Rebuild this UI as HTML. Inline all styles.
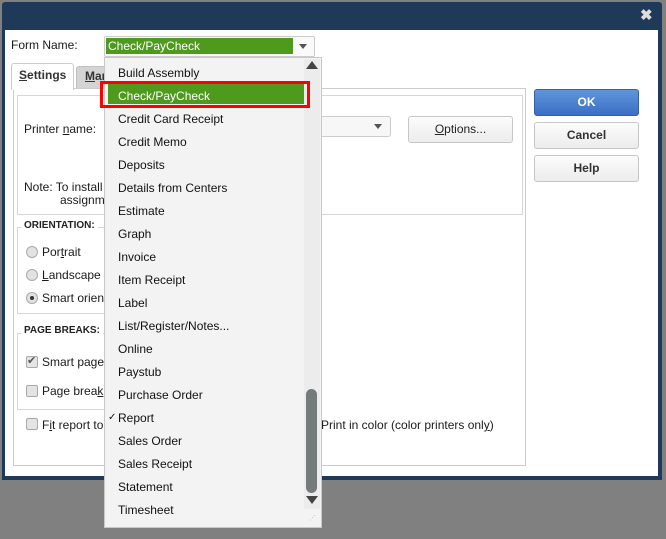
<!DOCTYPE html>
<html><head><style>
*{margin:0;padding:0;box-sizing:border-box}
body{width:666px;height:539px;background:#808080;position:relative;overflow:hidden;font-family:"Liberation Sans",Arial,sans-serif;font-size:12px;color:#1a1a1a}
.a{position:absolute}
.t{position:absolute;white-space:nowrap;line-height:14px}
.btn{position:absolute;border:1px solid #c6c6c6;border-radius:3px;background:linear-gradient(#fcfcfc,#ececec);text-align:center;font-weight:bold;color:#333;font-size:12px}
.grp{position:absolute;border:1px solid #d6d6d6}
.lbl{position:absolute;background:#fff;font-size:10px;font-weight:bold;color:#222;padding:0 3px;line-height:12px}
.rad{position:absolute;width:12px;height:12px;border:1px solid #aaa;border-radius:50%;background:#e2e2e2}
.chk{position:absolute;width:12px;height:12px;border:1px solid #aaa;background:#e4e4e4;border-radius:2px}
.it{position:absolute;left:118px;font-size:12px;line-height:14px;white-space:nowrap;color:#111}
</style></head><body>
<div class="a" style="left:2px;top:2px;width:660px;height:478px;background:#1f3a58;border-radius:3px 3px 0 0"></div>
<div class="a" style="left:5px;top:30px;width:653px;height:446px;background:#fff"></div>
<div class="t" style="left:640px;top:9px;color:#ddd;font-weight:bold;font-size:15px">✖</div>

<div class="t" style="left:11px;top:38px">Form Name:</div>
<div class="a" style="left:104px;top:36px;width:211px;height:21px;border:1px solid #ccc;border-radius:2px;background:#fafafa"></div>
<div class="a" style="left:106px;top:38px;width:187px;height:16px;background:#4e9a1c"></div>
<div class="t" style="left:108px;top:39px;color:#fff">Check/PayCheck</div>
<div class="a" style="left:299px;top:44px;border:4px solid transparent;border-top:5px solid #555"></div>

<!-- tabs -->
<div class="a" style="left:76px;top:66px;width:40px;height:23px;background:#d4d4d4;border:1px solid #c0c0c0;border-radius:3px 3px 0 0"></div>
<div class="t" style="left:85px;top:69px;font-weight:bold;color:#333"><u>M</u>ar</div>
<div class="a" style="left:13px;top:88px;width:513px;height:378px;border:1px solid #ccc"></div>
<div class="a" style="left:11px;top:63px;width:63px;height:27px;background:#fff;border:1px solid #ccc;border-bottom:none;border-radius:3px 3px 0 0"></div>
<div class="t" style="left:19px;top:68px;font-weight:bold;color:#333"><u>S</u>ettings</div>

<div class="grp" style="left:17px;top:95px;width:506px;height:120px"></div>
<div class="t" style="left:24px;top:122px">Printer <u>n</u>ame:</div>
<div class="a" style="left:320px;top:116px;width:71px;height:21px;border:1px solid #ccc;border-radius:3px;background:#f7f7f7"></div>
<div class="a" style="left:374px;top:124px;border:4px solid transparent;border-top:5px solid #555"></div>
<div class="btn" style="left:408px;top:116px;width:105px;height:27px;line-height:25px;font-weight:normal;color:#222"><u>O</u>ptions...</div>
<div class="t" style="left:24px;top:180px">Note: To install</div>
<div class="t" style="left:60px;top:193px">assignm</div>

<div class="grp" style="left:17px;top:227px;width:100px;height:87px;border-right:none"></div>
<div class="lbl" style="left:21px;top:220px">ORIENTATION:</div>
<div class="rad" style="left:26px;top:246px"></div><div class="t" style="left:42px;top:245px">Por<u>t</u>rait</div>
<div class="rad" style="left:26px;top:269px"></div><div class="t" style="left:42px;top:268px"><u>L</u>andscape</div>
<div class="rad" style="left:26px;top:292px"></div><div class="a" style="left:30px;top:296px;width:4px;height:4px;border-radius:50%;background:#333"></div><div class="t" style="left:42px;top:291px">Smart orien</div>

<div class="grp" style="left:17px;top:333px;width:100px;height:77px;border-right:none"></div>
<div class="lbl" style="left:21px;top:325px">PAGE BREAKS:</div>
<div class="chk" style="left:26px;top:356px"></div><div class="t" style="left:27px;top:354px;font-size:11px;color:#555">✔</div><div class="t" style="left:42px;top:355px">Smart page</div>
<div class="chk" style="left:26px;top:385px"></div><div class="t" style="left:42px;top:384px">Page brea<u>k</u></div>
<div class="chk" style="left:26px;top:418px"></div><div class="t" style="left:42px;top:418px">F<u>i</u>t report to</div>
<div class="t" style="left:321px;top:418px">Print in color (color printers onl<u>y</u>)</div>

<div class="btn" style="left:534px;top:89px;width:105px;height:27px;line-height:25px;background:linear-gradient(#5f95dd,#3c6fc4);border-color:#3560a8;color:#fff">OK</div>
<div class="btn" style="left:534px;top:122px;width:105px;height:27px;line-height:25px">Cancel</div>
<div class="btn" style="left:534px;top:155px;width:105px;height:27px;line-height:25px">Help</div>

<!-- dropdown -->
<div class="a" style="left:104px;top:57px;width:218px;height:471px;background:#f3f3f3;border:1px solid #c8c8c8"></div>
<div class="a" style="left:304px;top:59px;width:16px;height:450px;background:#ececec"></div>
<div class="a" style="left:306px;top:61px;border:6px solid transparent;border-bottom:8px solid #444;border-top:0"></div>
<div class="a" style="left:306px;top:389px;width:11px;height:104px;background:#757a7a;border-radius:6px"></div>
<div class="a" style="left:306px;top:496px;border:6px solid transparent;border-top:8px solid #444;border-bottom:0"></div>
<div class="t" style="left:309px;top:512px;font-size:7px;color:#bbb">⋰</div>
<div class="a" style="left:108px;top:84px;width:196px;height:20px;background:#4e9a1c"></div>
<div class="a" style="left:100px;top:81px;width:210px;height:27px;border:3px solid #f00"></div>
<div class="it" style="top:66px">Build Assembly</div>
<div class="it" style="top:89px;color:#fff">Check/PayCheck</div>
<div class="it" style="top:112px">Credit Card Receipt</div>
<div class="it" style="top:135px">Credit Memo</div>
<div class="it" style="top:158px">Deposits</div>
<div class="it" style="top:181px">Details from Centers</div>
<div class="it" style="top:204px">Estimate</div>
<div class="it" style="top:227px">Graph</div>
<div class="it" style="top:250px">Invoice</div>
<div class="it" style="top:273px">Item Receipt</div>
<div class="it" style="top:296px">Label</div>
<div class="it" style="top:319px">List/Register/Notes...</div>
<div class="it" style="top:342px">Online</div>
<div class="it" style="top:365px">Paystub</div>
<div class="it" style="top:388px">Purchase Order</div>
<div class="it" style="top:411px"><span style="position:absolute;left:-10px;font-size:10px">✓</span>Report</div>
<div class="it" style="top:434px">Sales Order</div>
<div class="it" style="top:457px">Sales Receipt</div>
<div class="it" style="top:480px">Statement</div>
<div class="it" style="top:503px">Timesheet</div>
</body></html>
